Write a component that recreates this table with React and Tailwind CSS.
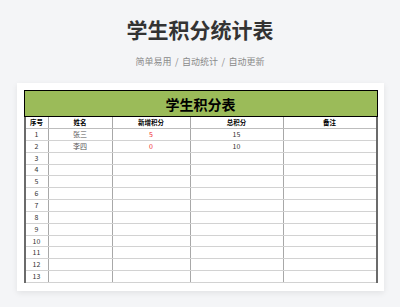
import React from 'react';

const cols = ['序号', '姓名', '新增积分', '总积分', '备注'];

const rows = [
  { no: 1, name: '张三', add: '5', total: '15' },
  { no: 2, name: '李四', add: '0', total: '10' },
  ...Array.from({ length: 11 }, (_, i) => ({ no: i + 3, name: '', add: '', total: '' })),
];

const gridCols = 'grid grid-cols-[23px_64px_78px_93px_92px]';

const App = () => {
  return (
    <div
      className="min-h-screen bg-[#f4f5f7] flex flex-col items-center pt-[18px]"
      style={{ fontFamily: '"Noto Sans CJK SC", "Noto Sans", sans-serif' }}
    >
      <h1 className="text-[21px] leading-[22px] font-bold text-[#333]">学生积分统计表</h1>
      <p className="mt-[16px] text-[9px] leading-[12px] text-[#8a8a8a] flex items-center">
        <span>简单易用</span>
        <span className="mx-[3.5px]">/</span>
        <span>自动统计</span>
        <span className="mx-[3.5px]">/</span>
        <span>自动更新</span>
      </p>

      {/* Sheet card */}
      <div className="mt-[15px] w-[367px] bg-white pl-[7px] pr-[6px] pt-[7px] pb-[8px] shadow-[0_2px_6px_rgba(0,0,0,0.08)]">
        <div className="w-[354px]">
          <div className="h-[27px] bg-[#9bbb59] border-[1.5px] border-black flex items-center justify-center">
            <span className="text-[14px] font-bold text-black leading-none">学生积分表</span>
          </div>

          <div className="border-l-2 border-r-2 border-[#6b6b6b]">
            <div className={`${gridCols} h-[12px] border-b border-[#bdbdbd]`}>
              {cols.map((c, i) => (
                <div
                  key={c}
                  className={`flex items-center justify-center text-[6.5px] font-bold text-black leading-none ${i < 4 ? 'border-r border-[#a8a8a8]' : ''}`}
                >
                  {c}
                </div>
              ))}
            </div>

            {rows.map((r) => (
              <div key={r.no} className={`${gridCols} h-[11.85px] border-b border-[#d2d2d2]`}>
                <div className="flex items-center justify-center border-r border-[#a8a8a8] text-[7px] text-[#333] leading-none">{r.no}</div>
                <div className="flex items-center justify-center border-r border-[#a8a8a8] text-[7px] text-[#555] leading-none">{r.name}</div>
                <div className="flex items-center justify-center border-r border-[#a8a8a8] text-[7px] text-[#f02a2a] leading-none">{r.add}</div>
                <div className="flex items-center justify-center border-r border-[#a8a8a8] text-[7px] text-[#333] leading-none">{r.total}</div>
                <div />
              </div>
            ))}
          </div>
        </div>
      </div>
    </div>
  );
};

export default App;
